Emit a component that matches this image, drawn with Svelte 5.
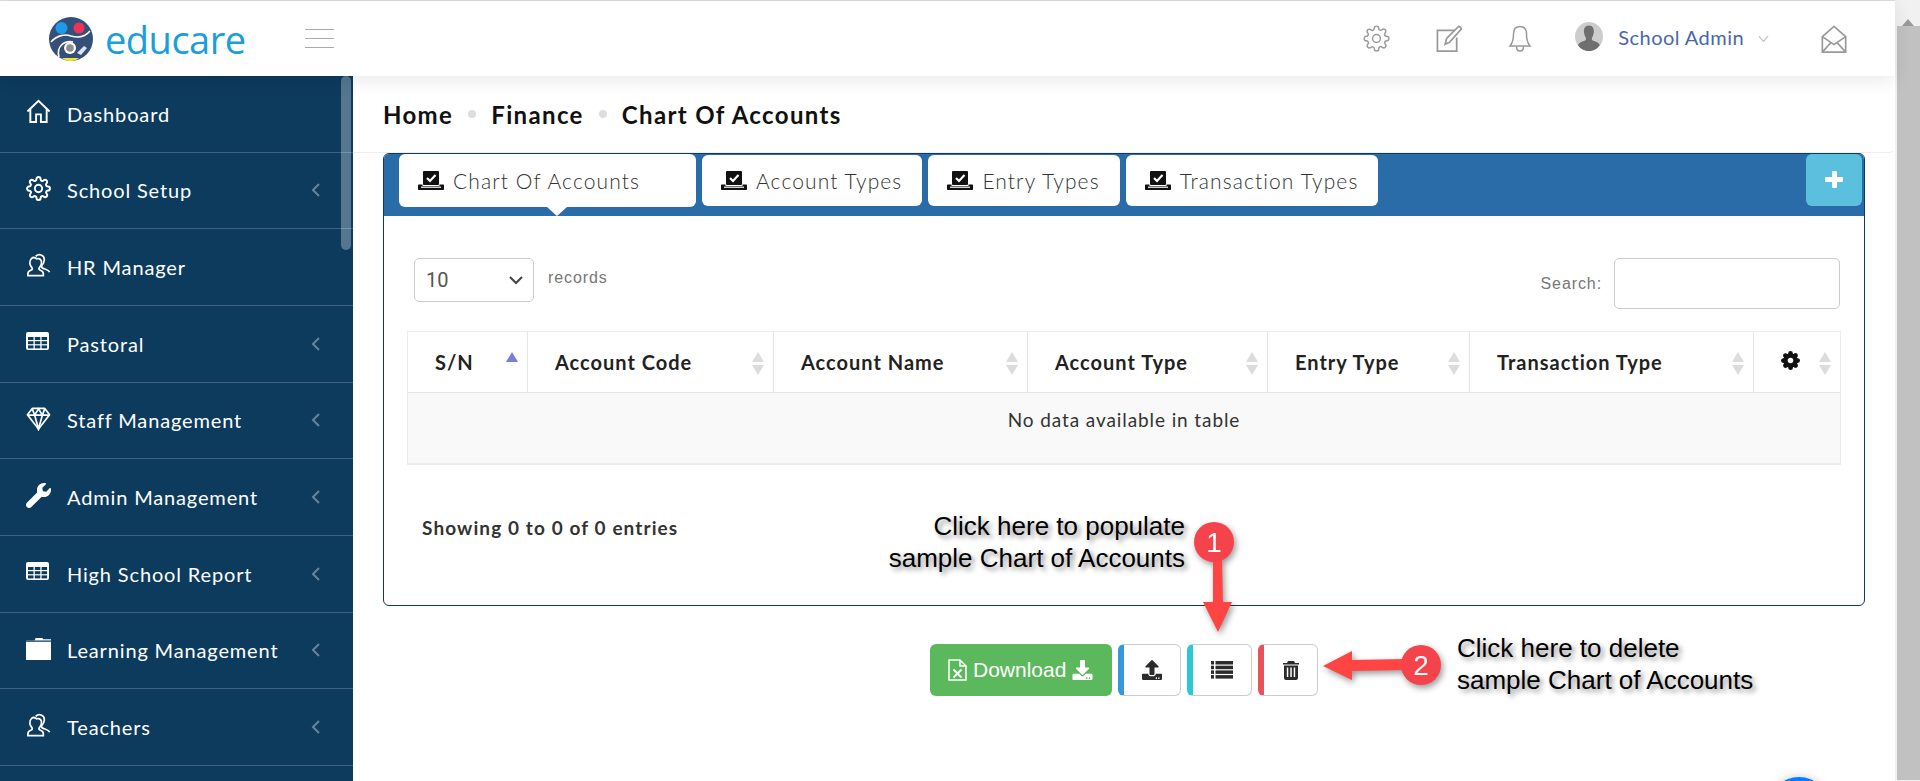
<script>
  const menu = [
    { label: 'Dashboard', icon: 'home' },
    { label: 'School Setup', icon: 'gear', more: true },
    { label: 'HR Manager', icon: 'people' },
    { label: 'Pastoral', icon: 'table', more: true },
    { label: 'Staff Management', icon: 'diamond', more: true },
    { label: 'Admin Management', icon: 'wrench', more: true },
    { label: 'High School Report', icon: 'table', more: true },
    { label: 'Learning Management', icon: 'folder', more: true },
    { label: 'Teachers', icon: 'people', more: true },
    { label: 'Students', icon: 'people', more: true }
  ]

  const tabs = ['Chart Of Accounts', 'Account Types', 'Entry Types', 'Transaction Types']

  const columns = [
    { label: 'S/N', width: 120, sorted: true },
    { label: 'Account Code', width: 246 },
    { label: 'Account Name', width: 254 },
    { label: 'Account Type', width: 240 },
    { label: 'Entry Type', width: 202 },
    { label: 'Transaction Type', width: 284 },
    { label: '', width: 87, gear: true }
  ]

  const gearPath = 'M19.4 15a1.65 1.65 0 0 0 .33 1.82l.06.06a2 2 0 0 1 0 2.83 2 2 0 0 1-2.83 0l-.06-.06a1.65 1.65 0 0 0-1.82-.33 1.65 1.65 0 0 0-1 1.51V21a2 2 0 0 1-2 2 2 2 0 0 1-2-2v-.09A1.65 1.65 0 0 0 9 19.4a1.65 1.65 0 0 0-1.82.33l-.06.06a2 2 0 0 1-2.83 0 2 2 0 0 1 0-2.83l.06-.06a1.65 1.65 0 0 0 .33-1.82 1.65 1.65 0 0 0-1.51-1H3a2 2 0 0 1-2-2 2 2 0 0 1 2-2h.09A1.65 1.65 0 0 0 4.6 9a1.65 1.65 0 0 0-.33-1.82l-.06-.06a2 2 0 0 1 0-2.83 2 2 0 0 1 2.83 0l.06.06a1.65 1.65 0 0 0 1.82.33H9a1.65 1.65 0 0 0 1-1.51V3a2 2 0 0 1 2-2 2 2 0 0 1 2 2v.09a1.65 1.65 0 0 0 1 1.51 1.65 1.65 0 0 0 1.82-.33l.06-.06a2 2 0 0 1 2.83 0 2 2 0 0 1 0 2.83l-.06.06a1.65 1.65 0 0 0-.33 1.82V9a1.65 1.65 0 0 0 1.51 1H21a2 2 0 0 1 2 2 2 2 0 0 1-2 2h-.09a1.65 1.65 0 0 0-1.51 1z'
</script>

{#snippet menuIcon(name)}
  {#if name === 'home'}
    <svg class="micon" viewBox="0 0 26 26" fill="none" stroke="#fff" stroke-width="2">
      <path d="M1.5 13 13 2l11.500 11M4.500 10.500V24h6v-8h5v8h6V10.500" />
    </svg>
  {:else if name === 'gear'}
    <svg class="micon" viewBox="0 0 24 24" fill="none" stroke="#fff" stroke-width="1.900">
      <circle cx="12" cy="12" r="3.500" />
      <path d={gearPath} />
    </svg>
  {:else if name === 'people'}
    <svg class="micon" viewBox="0 0 26 26" fill="none" stroke="#fff" stroke-width="1.800">
      <path d="M10 3.500c4-3.500 9.500-1 9 4-.2 2.500-1.300 4-2.500 5.500-.8 1.300 0 2.500 1.500 3 1.500.6 6 1.800 6.500 4" />
      <path d="M11 6.500c3.500-1 6 1.500 5 5.500-.5 2-1.500 3-2.300 4-.7 1 0 2 1.300 2.500 1.500.6 3 1.500 3 3.300v2.200H2v-2.200c0-1.800 1.500-2.700 3-3.300 1.300-.5 2-1.500 1.300-2.500-.8-1-2-2.500-2.300-4.500C3.500 7.500 7 3 11 6.500z" transform="translate(0 -.5)" />
    </svg>
  {:else if name === 'table'}
    <svg class="micon tbl" viewBox="0 0 23 18">
      <rect width="23" height="18" rx="2" fill="#fff" />
      <g fill="#0c3b5e">
        <rect x="2" y="5" width="5.500" height="3" /><rect x="8.800" y="5" width="5.500" height="3" /><rect x="15.600" y="5" width="5.500" height="3" />
        <rect x="2" y="9.200" width="5.500" height="3" /><rect x="8.800" y="9.200" width="5.500" height="3" /><rect x="15.600" y="9.200" width="5.500" height="3" />
        <rect x="2" y="13.400" width="5.500" height="3" /><rect x="8.800" y="13.400" width="5.500" height="3" /><rect x="15.600" y="13.400" width="5.500" height="3" />
      </g>
    </svg>
  {:else if name === 'diamond'}
    <svg class="micon" viewBox="0 0 26 26" fill="none" stroke="#fff" stroke-width="1.800">
      <path d="M6.500 2.500h13l5 6.500L13 24 1.500 9z" stroke-linejoin="round" />
      <path d="M1.500 9.500h23M9 9.500 13 24l4-14.500M6.500 3 9 9.500 13 3l4 6.500L19.500 3" />
    </svg>
  {:else if name === 'wrench'}
    <svg class="micon" viewBox="0 0 512 512" fill="#fff">
      <path d="M507.730 109.100c-2.240-9.030-13.540-12.090-20.120-5.510l-74.360 74.360-67.880-11.310-11.310-67.880 74.360-74.360c6.620-6.620 3.430-17.900-5.660-20.160-47.380-11.740-99.550.91-136.580 37.930-39.640 39.640-50.550 97.100-34.050 147.200L18.740 402.760c-24.990 24.990-24.990 65.510 0 90.500 24.990 24.990 65.510 24.990 90.500 0l213.210-213.210c50.120 16.710 107.470 5.680 147.370-34.220 37.070-37.070 49.700-89.320 37.910-136.730z" />
    </svg>
  {:else}
    <svg class="micon" viewBox="0 0 26 26" fill="#fff">
      <path d="M0 4.500h9L10 2h7l1 1.500h8v1.200H0zM0 6h26v19H0z" />
    </svg>
  {/if}
{/snippet}

{#snippet trayCheck()}
  <svg class="tray" viewBox="0 0 26 19">
    <rect x="5" y="0" width="16" height="14" rx="1" fill="#111" />
    <path d="m9 7 3 3 5.500-6" fill="none" stroke="#fff" stroke-width="2.200" />
    <path d="M1 13.500h3.500v1.500h17v-1.500H25c.6 0 1 .4 1 1V18c0 .6-.4 1-1 1H1c-.6 0-1-.4-1-1v-3.500c0-.6.4-1 1-1z" fill="#111" />
    <rect x="3" y="15.600" width="20" height="1.200" fill="#fff" />
  </svg>
{/snippet}

<div class="page">
  <div class="window">
    <header class="topbar">
      <div class="brand">
        <svg class="logo" viewBox="0 0 44 44">
          <circle cx="22" cy="22" r="22" fill="#34507a" />
          <circle cx="12.500" cy="11" r="6" fill="#1d9be8" />
          <circle cx="30" cy="11" r="5.500" fill="#ee3357" />
          <path d="M2 25c6-7 14-8 20-6 7 2 14 1 19-5M10 40c-3-10 5-17 14-15" fill="none" stroke="#fff" stroke-width="1.600" />
          <circle cx="21" cy="31" r="6" fill="#fff" />
          <circle cx="21" cy="31" r="3.800" fill="#8e8e8e" />
          <path d="m28 36 7-7 3 2-6 7z" fill="#dfe3ea" />
          <path d="M13 41h17c-2 2-5 3-8.500 3S15 43 13 41z" fill="#f5e625" />
        </svg>
        <span class="wordmark">educare</span>
        <div class="burger"><i></i><i></i><i></i></div>
      </div>
      <div class="tools">
        <svg class="tool" viewBox="0 0 24 24" fill="none" stroke="#999" stroke-width="1.300">
          <circle cx="12" cy="12" r="3.500" /><path d={gearPath} />
        </svg>
        <svg class="tool edit" viewBox="0 0 28 28" fill="none" stroke="#999" stroke-width="1.800">
          <path d="M20 5.500H2V27h20V13" /><path d="M10 20l1.500-6L24 1.500c1-.5 3 1.500 2.500 3L14.500 18z" />
        </svg>
        <svg class="tool bell" viewBox="0 0 24 28" fill="none" stroke="#999" stroke-width="1.500">
          <path d="M12 1.500c-4.500 0-6.500 3.500-6.500 7.500 0 5-1 9-3.500 12h20c-2.500-3-3.500-7-3.500-12 0-4-2-7.500-6.500-7.500z" />
          <path d="M8.500 21.500c0 6 7 6 7 0" />
        </svg>
        <div class="user">
          <svg class="avatar" viewBox="0 0 28 29">
            <ellipse cx="14" cy="14.500" rx="14" ry="14.500" fill="#cdcdcd" />
            <path d="M14 3.500c-4 0-5.500 3-5 7 .3 2.500 1.500 4.500 2 6 .2 1-.5 2-2 2.500-2 .8-5 1.500-6 4 2 3.500 6 6 11 6s8.700-2.500 10.800-6c-1-2.500-4-3.200-6-4-1.500-.5-2.200-1.500-2-2.500.5-1.500 1.700-3.500 2-6 .4-4-1-7-4.800-7z" fill="#6f6f6f" />
          </svg>
          <span class="username">School Admin</span>
          <svg class="chev" viewBox="0 0 12 8" fill="none" stroke="#c4c4c4" stroke-width="1.300"><path d="m1 1 5 5.500L11 1" /></svg>
        </div>
        <svg class="tool mail" viewBox="0 0 28 30" fill="none" stroke="#999" stroke-width="1.800">
          <path d="M1.500 12.500 14 1.500l12.500 11V29h-25zM1.500 12.500 14 21l12.500-8.500M1.500 29l9-10M26.500 29l-9-10" />
        </svg>
      </div>
    </header>

    <div class="layout">
      <aside class="sidebar">
        {#each menu as item}
          <div class="item">
            <span class="iconbox">{@render menuIcon(item.icon)}</span>
            <span class="label">{item.label}</span>
            {#if item.more}
              <svg class="more" viewBox="0 0 9 14" fill="none" stroke="#6a8397" stroke-width="2"><path d="M8 1 2 7l6 6" /></svg>
            {/if}
          </div>
        {/each}
        <div class="side-thumb"></div>
      </aside>

      <main class="main">
        <nav class="crumbs">
          <span>Home</span><i></i><span>Finance</span><i></i><span>Chart Of Accounts</span>
        </nav>

        <section class="card">
          <div class="card-head">
            {#each tabs as tab, i}
              <div class="tab" class:active={i === 0}>
                {@render trayCheck()}
                <span>{tab}</span>
              </div>
            {/each}
            <div class="plus"></div>
          </div>

          <div class="card-body">
            <div class="controls">
              <div class="length">
                <div class="select">
                  <span>10</span>
                  <svg viewBox="0 0 14 9" fill="none" stroke="#444" stroke-width="2"><path d="m1 1 6 6 6-6" /></svg>
                </div>
                <span class="muted records">records</span>
              </div>
              <div class="search">
                <span class="muted">Search:</span>
                <div class="input"></div>
              </div>
            </div>

            <table>
              <thead>
                <tr>
                  {#each columns as col}
                    <th style="width: {col.width}px">
                      {#if col.gear}
                        <svg class="th-gear" viewBox="0 0 24 24">
                          <path d={gearPath} fill="#111" stroke="#111" stroke-width="2" />
                          <circle cx="12" cy="12" r="3.500" fill="#fff" />
                        </svg>
                      {:else}
                        {col.label}
                      {/if}
                      <span class="sort">
                        {#if col.sorted}
                          <b class="up on"></b>
                        {:else}
                          <b class="up"></b><b class="down"></b>
                        {/if}
                      </span>
                    </th>
                  {/each}
                </tr>
              </thead>
              <tbody>
                <tr><td colspan="7">No data available in table</td></tr>
              </tbody>
            </table>

            <p class="info">Showing 0 to 0 of 0 entries</p>
          </div>
        </section>

        <div class="actions">
          <div class="btn-download">
            <svg class="xls" viewBox="0 0 19 22" fill="none" stroke="#fff" stroke-width="1.500">
              <path d="M1 1h11l6 6v14H1zM12 1v6h6" />
              <path d="m5.500 10.500 8 8M13.500 10.500l-8 8" stroke-width="1.800" />
            </svg>
            <span>Download</span>
            <svg class="dl" viewBox="0 0 512 512" fill="#fff">
              <path d="M216 0h80c13.300 0 24 10.700 24 24v168h87.700c17.800 0 26.700 21.500 14.100 34.100L269.700 378.300c-7.500 7.500-19.800 7.500-27.300 0L90.100 226.100c-12.600-12.600-3.700-34.100 14.100-34.100H192V24c0-13.300 10.700-24 24-24zm296 376v112c0 13.300-10.700 24-24 24H24c-13.300 0-24-10.700-24-24V376c0-13.300 10.700-24 24-24h146.700l49 49c20.100 20.100 52.500 20.100 72.600 0l49-49H488c13.300 0 24 10.700 24 24zm-124 88c0-11-9-20-20-20s-20 9-20 20 9 20 20 20 20-9 20-20zm64 0c0-11-9-20-20-20s-20 9-20 20 9 20 20 20 20-9 20-20z" />
            </svg>
          </div>
          <div class="btn-o blue">
            <svg viewBox="0 0 512 512" fill="#2b2b2b">
              <path d="M296 384h-80c-13.300 0-24-10.700-24-24V192h-87.700c-17.800 0-26.700-21.500-14.100-34.100L242.300 5.700c7.500-7.500 19.800-7.500 27.300 0l152.200 152.200c12.600 12.600 3.700 34.100-14.100 34.100H320v168c0 13.300-10.700 24-24 24zm216-8v112c0 13.300-10.700 24-24 24H24c-13.300 0-24-10.700-24-24V376c0-13.300 10.700-24 24-24h136v8c0 30.900 25.100 56 56 56h80c30.900 0 56-25.100 56-56v-8h136c13.300 0 24 10.700 24 24zm-124 88c0-11-9-20-20-20s-20 9-20 20 9 20 20 20 20-9 20-20zm64 0c0-11-9-20-20-20s-20 9-20 20 9 20 20 20 20-9 20-20z" />
            </svg>
          </div>
          <div class="btn-o cyan">
            <svg class="list" viewBox="0 0 22 18" fill="#2b2b2b">
              <rect y="0" width="3" height="3.500" /><rect x="4.500" y="0" width="17.500" height="3.500" />
              <rect y="4.700" width="3" height="3.500" /><rect x="4.500" y="4.700" width="17.500" height="3.500" />
              <rect y="9.400" width="3" height="3.500" /><rect x="4.500" y="9.400" width="17.500" height="3.500" />
              <rect y="14.100" width="3" height="3.500" /><rect x="4.500" y="14.100" width="17.500" height="3.500" />
            </svg>
          </div>
          <div class="btn-o red">
            <svg class="bin" viewBox="0 0 16 19" fill="#2b2b2b">
              <path d="M5 0h6l1 2h4v1.600H0V2h4zM1 4.500h14V17c0 1.100-.9 2-2 2H3c-1.100 0-2-.9-2-2zm2.800 2v9.500h1.500V6.500zm3.500 0v9.500h1.500V6.500zm3.400 0v9.500h1.500V6.500z" fill-rule="evenodd" />
            </svg>
          </div>
        </div>
      </main>
    </div>
  </div>

  <div class="scrollbar">
    <div class="scroll-up"></div>
    <div class="scroll-thumb"></div>
  </div>

  <!-- callouts pasted over the screenshot -->
  <p class="note note-one">Click here to populate<br />sample Chart of Accounts</p>
  <p class="note note-two">Click here to delete<br />sample Chart of Accounts</p>
  <svg class="marks" viewBox="0 0 1920 781">
    <path d="M1213 560h9l1 42h9l-14 30-15-30h10z" fill="#ff4444" />
    <circle cx="1214" cy="542" r="20" fill="#f5434b" />
    <text x="1214" y="552" class="num">1</text>
    <path d="M1323 666l29-15v9l52-1v11l-52 1v9z" fill="#ff4444" />
    <circle cx="1421" cy="665" r="20" fill="#f5434b" />
    <text x="1421" y="675" class="num">2</text>
  </svg>
  <div class="chat"></div>
</div>

<style>
  :global(body) {
    margin: 0;
    overflow: hidden;
    background: #fff;
  }
  .page {
    position: relative;
    display: flex;
    height: 781px;
    overflow: hidden;
    font-family: Lato, sans-serif;
    background: #fff;
  }
  .window {
    flex: 1;
    min-width: 0;
    display: flex;
    flex-direction: column;
    border-top: 1px solid #ddd;
  }
  .topbar {
    position: relative;
    z-index: 2;
    height: 75px;
    display: flex;
    justify-content: space-between;
    align-items: center;
    background: #fff;
    box-shadow: 0 4px 18px rgba(0, 0, 0, 0.09);
  }
  .brand {
    display: flex;
    align-items: center;
    padding-left: 49px;
  }
  .logo {
    width: 44px;
    height: 44px;
  }
  .wordmark {
    margin-left: 12px;
    font-family: "Open Sans", sans-serif;
    font-size: 38px;
    line-height: 44px;
    color: #1b9ed9;
    letter-spacing: -0.5px;
  }
  .burger {
    margin-left: 59px;
    width: 29px;
    display: flex;
    flex-direction: column;
    gap: 8px;
  }
  .burger i {
    height: 1px;
    background: #aaa;
  }
  .tools {
    display: flex;
    align-items: center;
    padding-right: 47px;
  }
  .tool {
    width: 27px;
    height: 27px;
    margin-right: 45px;
  }
  .edit {
    width: 28px;
    height: 27px;
  }
  .bell {
    width: 24px;
    height: 28px;
  }
  .user {
    display: flex;
    align-items: center;
    margin-right: 51px;
    margin-left: -2px;
  }
  .tool.mail {
    margin: 0;
    width: 28px;
    height: 28px;
  }
  .avatar {
    width: 28px;
    height: 29px;
    margin-top: -4px;
  }
  .username {
    margin-left: 15px;
    font-size: 20px;
    color: #4868a8;
    margin-top: -3px;
    letter-spacing: 0.45px;
  }
  .chev {
    width: 11px;
    height: 8px;
    margin-left: 14px;
  }
  .layout {
    flex: 1;
    min-height: 0;
    display: flex;
  }
  .sidebar {
    position: relative;
    flex: none;
    width: 353px;
    overflow: hidden;
    background: #0c3b5e;
    color: #fff;
  }
  .item {
    box-sizing: border-box;
    height: 76.67px;
    padding-left: 26px;
    padding-right: 33px;
    display: flex;
    align-items: center;
    border-bottom: 1.5px solid #3e6381;
  }
  .iconbox {
    flex: none;
    width: 41px;
    margin-top: -4px;
    display: flex;
  }
  .micon {
    width: 25px;
    height: 25px;
  }
  .micon.tbl {
    width: 23px;
    height: 18px;
    margin-top: -2px;
  }
  .label {
    flex: 1;
    font-size: 20px;
    white-space: nowrap;
    letter-spacing: 0.85px;
  }
  .more {
    flex: none;
    width: 9px;
    height: 14px;
  }
  .side-thumb {
    position: absolute;
    top: 0;
    left: 341px;
    width: 10px;
    height: 174px;
    border-radius: 5px;
    background: rgba(255, 255, 255, 0.3);
  }
  .main {
    flex: 1;
    min-width: 0;
    display: flex;
    flex-direction: column;
  }
  .crumbs {
    box-sizing: border-box;
    height: 77px;
    padding-left: 30px;
    display: flex;
    align-items: center;
    gap: 15px;
    border-bottom: 1px solid #eee;
    border-bottom-right-radius: 6px;
    font-size: 24px;
    font-weight: 700;
    color: #111;
    letter-spacing: 1.35px;
  }
  .crumbs i {
    width: 8px;
    height: 8px;
    border-radius: 50%;
    background: #ddd;
  }
  .card {
    box-sizing: border-box;
    height: 453px;
    margin: 0 30px;
    border: 1px solid #0c3b5e;
    border-radius: 6px;
    overflow: hidden;
  }
  .card-head {
    height: 62px;
    box-sizing: border-box;
    padding-left: 15px;
    display: flex;
    align-items: flex-start;
    gap: 6px;
    background: #2a6ca8;
  }
  .tab {
    position: relative;
    box-sizing: border-box;
    margin-top: 1px;
    height: 51px;
    padding: 0 20px 0 19px;
    display: flex;
    align-items: center;
    gap: 9px;
    background: #fff;
    border-radius: 6px;
    font-size: 21px;
    font-weight: 300;
    color: #333;
    letter-spacing: 1.1px;
  }
  .tab.active {
    margin-top: 0;
    height: 53px;
    width: 297px;
  }
  .tab.active::after {
    content: "";
    position: absolute;
    left: 148px;
    bottom: -9px;
    border-left: 10px solid transparent;
    border-right: 10px solid transparent;
    border-top: 9px solid #fff;
  }
  .tray {
    flex: none;
    width: 26px;
    height: 19px;
  }
  .plus {
    position: relative;
    margin-left: auto;
    margin-right: 2px;
    margin-top: 0;
    width: 56px;
    height: 52px;
    border-radius: 6px;
    background: #5bc0de;
  }
  .plus::before,
  .plus::after {
    content: "";
    position: absolute;
    background: #fff;
    border-radius: 1px;
  }
  .plus::before {
    left: 19px;
    top: 23px;
    width: 18px;
    height: 5px;
  }
  .plus::after {
    left: 25.500px;
    top: 17px;
    width: 5px;
    height: 17px;
  }
  .card-body {
    padding: 42px 24px 0 23px;
  }
  .controls {
    display: flex;
    justify-content: space-between;
    align-items: flex-start;
    height: 51px;
  }
  .length {
    margin-left: 7px;
    display: flex;
    align-items: flex-start;
    gap: 14px;
  }
  .select {
    box-sizing: border-box;
    width: 120px;
    height: 44px;
    padding: 0 10px 0 11px;
    display: flex;
    justify-content: space-between;
    align-items: center;
    border: 1px solid #ccc;
    border-radius: 5px;
    font-family: Roboto, sans-serif;
    font-size: 20px;
    color: #555;
  }
  .select svg {
    width: 14px;
    height: 9px;
  }
  .muted {
    font-family: "Liberation Sans", sans-serif;
    font-size: 16px;
    color: #777;
    letter-spacing: 0.9px;
  }
  .records {
    line-height: 40px;
  }
  .search {
    display: flex;
    align-items: center;
    gap: 12px;
  }
  .input {
    box-sizing: border-box;
    width: 226px;
    height: 51px;
    border: 1px solid #ccc;
    border-radius: 5px;
  }
  table {
    margin-top: 22px;
    width: 1433px;
    table-layout: fixed;
    border-collapse: collapse;
    border: 1px solid #e9edf1;
    border-bottom-width: 2px;
  }
  th {
    position: relative;
    box-sizing: border-box;
    height: 61px;
    padding: 0 0 0 27px;
    text-align: left;
    font-size: 20px;
    font-weight: 700;
    color: #222;
    letter-spacing: 1px;
    border-right: 1px solid #e6e6e6;
    border-bottom: 1px solid #e6e6e6;
  }
  th:last-child {
    border-right: none;
  }
  .th-gear {
    display: block;
    width: 19px;
    height: 19px;
    margin-top: -3px;
  }
  .sort {
    position: absolute;
    right: 9px;
    top: 20px;
    width: 12px;
    display: flex;
    flex-direction: column;
    gap: 3px;
  }
  .sort b {
    width: 0;
    border-left: 6px solid transparent;
    border-right: 6px solid transparent;
  }
  .sort .up {
    border-bottom: 10px solid #dcdcdc;
  }
  .sort .down {
    border-top: 10px solid #dcdcdc;
  }
  .sort .up.on {
    border-bottom-color: #7a7fd6;
  }
  td {
    height: 71px;
    padding: 0 0 16px;
    box-sizing: border-box;
    background: #f9f9f9;
    text-align: center;
    font-size: 19px;
    color: #333;
    letter-spacing: 0.9px;
  }
  .info {
    margin: 51px 0 0 15px;
    font-size: 19px;
    font-weight: 700;
    line-height: 24px;
    color: #333;
    letter-spacing: 1.1px;
  }
  .actions {
    margin-top: 38px;
    display: flex;
    justify-content: center;
    gap: 6px;
  }
  .btn-download {
    box-sizing: border-box;
    width: 182px;
    height: 52px;
    padding-left: 18px;
    display: flex;
    align-items: center;
    gap: 6px;
    border-radius: 6px;
    background: #5cb85c;
    font-family: "Liberation Sans", sans-serif;
    font-size: 21px;
    color: #fff;
  }
  .xls {
    width: 19px;
    height: 22px;
  }
  .dl {
    width: 21px;
    height: 20px;
  }
  .btn-o {
    box-sizing: border-box;
    height: 52px;
    width: 63px;
    display: flex;
    align-items: center;
    justify-content: center;
    border: 1px solid #ccc;
    border-left: 6px solid;
    border-radius: 6px;
  }
  .btn-o svg {
    width: 20px;
    height: 20px;
  }
  .blue {
    border-left-color: #3498db;
  }
  .cyan {
    width: 65px;
    border-left-color: #2fc6d8;
  }
  .red {
    width: 60px;
    border-left-color: #e8525f;
  }
  .btn-o .list {
    width: 22px;
    height: 18px;
  }
  .btn-o .bin {
    width: 16px;
    height: 19px;
  }
  .scrollbar {
    flex: none;
    width: 25px;
    margin-left: 0;
    background: #f1f1f1;
    display: flex;
    flex-direction: column;
    align-items: flex-end;
  }
  .scroll-up {
    align-self: center;
    margin-top: 10px;
    height: 16px;
    box-sizing: border-box;
    border-left: 6px solid transparent;
    border-right: 6px solid transparent;
    border-bottom: 7px solid #9a9a9a;
    width: 0;
  }
  .scroll-thumb {
    width: 23px;
    height: 754px;
    background: #c1c1c1;
  }
  .note {
    position: absolute;
    margin: 0;
    font-family: "Liberation Sans", sans-serif;
    font-size: 26px;
    line-height: 32px;
    color: #000;
    white-space: nowrap;
    text-shadow: 3px 3px 5px rgba(0, 0, 0, 0.45);
  }
  .note-one {
    top: 510px;
    right: 735px;
    text-align: right;
  }
  .note-two {
    top: 632px;
    left: 1457px;
  }
  .marks {
    position: absolute;
    inset: 0;
    width: 1920px;
    height: 781px;
    pointer-events: none;
    filter: drop-shadow(2px 3px 3px rgba(0, 0, 0, 0.4));
  }
  .num {
    font-family: "Liberation Sans", sans-serif;
    font-size: 28px;
    fill: #fff;
    text-anchor: middle;
  }
  .chat {
    position: absolute;
    left: 1769px;
    top: 777px;
    width: 60px;
    height: 60px;
    border-radius: 50%;
    background: #0a7cff;
    box-shadow: 0 0 10px rgba(0, 0, 0, 0.2);
  }
</style>
